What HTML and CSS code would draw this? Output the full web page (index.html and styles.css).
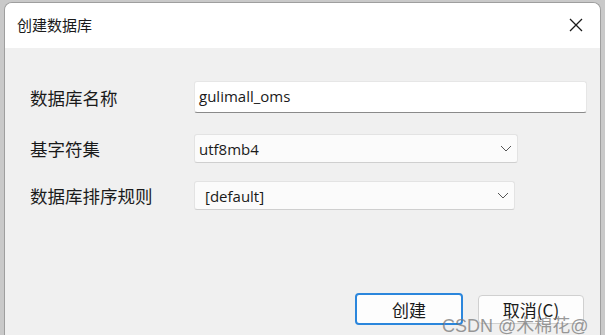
FILE: index.html
```html
<!DOCTYPE html>
<html lang="zh-CN">
<head>
    <meta charset="UTF-8">
    <title>创建数据库</title>
    <link rel="stylesheet" href="styles.css">
</head>
<body>
    <div class="window">
        <div class="titlebar">
            <span class="title">创建数据库</span>
            <svg class="close" width="14" height="14" viewBox="0 0 14 14">
                <path d="M1 1 L13 13 M13 1 L1 13" stroke="#1a1a1a" stroke-width="1.3" fill="none"/>
            </svg>
        </div>
        <div class="content">
            <div class="form">
                <div class="row row-name">
                    <label class="label">数据库名称</label>
                    <div class="input">gulimall_oms</div>
                </div>
                <div class="row row-charset">
                    <label class="label">基字符集</label>
                    <div class="select select-charset">
                        <span>utf8mb4</span>
                        <svg class="chevron" width="12" height="7" viewBox="0 0 12 7">
                            <path d="M1 1 L6 6 L11 1" stroke="#555" stroke-width="1" fill="none"/>
                        </svg>
                    </div>
                </div>
                <div class="row row-collation">
                    <label class="label">数据库排序规则</label>
                    <div class="select select-collation">
                        <span class="indent">[default]</span>
                        <svg class="chevron" width="12" height="7" viewBox="0 0 12 7">
                            <path d="M1 1 L6 6 L11 1" stroke="#555" stroke-width="1" fill="none"/>
                        </svg>
                    </div>
                </div>
            </div>
            <div class="actions">
                <button class="btn btn-primary">创建</button>
                <button class="btn">取消(C)</button>
            </div>
            <div class="watermark">CSDN @木棉花@</div>
        </div>
    </div>
</body>
</html>
```

FILE: styles.css
```css
html, body {
    margin: 0;
    height: 100%;
}

body {
    background: #c9c9c9;
    font-family: "Noto Sans CJK SC", "Noto Sans", sans-serif;
    color: #1a1a1a;
    overflow: hidden;
    padding: 2px 4px 0 4px;
    box-sizing: border-box;
}

.window {
    background: #f0f0f0;
    border: 1px solid #9e9e9e;
    border-bottom: none;
    border-radius: 8px 8px 0 0;
    height: 100%;
    box-sizing: border-box;
    overflow: hidden;
    position: relative;
}

/* Title bar */
.titlebar {
    background: #fff;
    height: 45px;
    display: flex;
    align-items: center;
    justify-content: space-between;
    padding: 0 17px 0 12px;
}

.title {
    font-size: 15px;
    margin-top: -2px;
}

.close {
    margin-top: -2px;
}

/* Form */
.content {
    padding: 33px 0 0 25px;
}

.row {
    display: flex;
    align-items: center;
}

.label {
    width: 164px;
    font-size: 17.5px;
    flex-shrink: 0;
}

.row-name {
    height: 32px;
    margin-bottom: 21px;
}

.row-charset {
    height: 29px;
    margin-bottom: 18px;
}

.row-collation {
    height: 29px;
}

.input {
    width: 393px;
    height: 32px;
    box-sizing: border-box;
    background: #fff;
    border: 1px solid #e6e6e6;
    border-bottom: 1px solid #8a8a8a;
    border-radius: 3px;
    font-family: "Open Sans", "Noto Sans", sans-serif;
    font-size: 15px;
    line-height: 29px;
    padding: 0 4px;
}

.select {
    height: 29px;
    box-sizing: border-box;
    background: #fbfbfb;
    border: 1px solid #e3e3e3;
    border-bottom-color: #cfcfcf;
    border-radius: 3px;
    display: flex;
    align-items: center;
    justify-content: space-between;
    font-family: "Open Sans", "Noto Sans", sans-serif;
    font-size: 15px;
    padding: 0 5px 0 4px;
}

.select-charset {
    width: 324px;
}

.select-collation {
    width: 321px;
}

.indent {
    padding-left: 6px;
}

/* Buttons */
.actions {
    display: flex;
    justify-content: flex-end;
    align-items: center;
    gap: 15px;
    margin-top: 83px;
    padding-right: 16px;
}

.btn {
    width: 106px;
    height: 29px;
    background: #fdfdfd;
    border: 1px solid #d0d0d0;
    border-radius: 4px;
    font-family: "Noto Sans CJK SC", sans-serif;
    font-size: 17px;
    color: #1a1a1a;
    padding: 0;
}

.btn-primary {
    width: 108px;
    height: 32px;
    border: 2px solid #2b86dc;
}

.watermark {
    position: absolute;
    left: 437px;
    top: 308px;
    font-family: "Liberation Sans", "Noto Sans CJK SC", sans-serif;
    font-size: 18px;
    color: rgba(120, 120, 120, 0.75);
    white-space: nowrap;
}
```
